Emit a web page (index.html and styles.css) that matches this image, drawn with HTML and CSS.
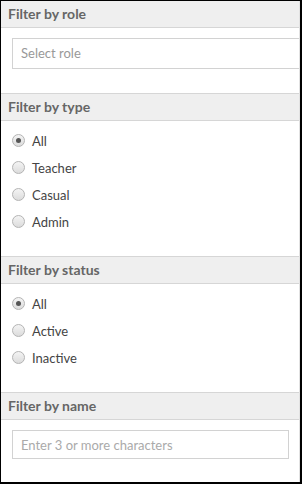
FILE: index.html
```html
<!DOCTYPE html>
<html lang="en">
  <head>
    <meta charset="UTF-8" />
    <meta name="viewport" content="width=device-width, initial-scale=1.0" />
    <title>Staff filters</title>
    <link rel="stylesheet" href="styles.css">
  </head>
  <body>
    <div class="filters">
      <section class="filter">
        <h3 class="filter-title">Filter by role</h3>
        <div class="filter-body">
          <div class="field field-wide">Select role</div>
        </div>
      </section>

      <section class="filter">
        <h3 class="filter-title">Filter by type</h3>
        <div class="filter-body options">
          <label class="option"><input type="radio" name="type" checked> All</label>
          <label class="option"><input type="radio" name="type"> Teacher</label>
          <label class="option"><input type="radio" name="type"> Casual</label>
          <label class="option"><input type="radio" name="type"> Admin</label>
        </div>
      </section>

      <section class="filter">
        <h3 class="filter-title">Filter by status</h3>
        <div class="filter-body options">
          <label class="option"><input type="radio" name="status" checked> All</label>
          <label class="option"><input type="radio" name="status"> Active</label>
          <label class="option"><input type="radio" name="status"> Inactive</label>
        </div>
      </section>

      <section class="filter">
        <h3 class="filter-title">Filter by name</h3>
        <div class="filter-body">
          <input class="field field-name" type="text" placeholder="Enter 3 or more characters">
        </div>
      </section>
    </div>
  </body>
</html>
```

FILE: styles.css
```css
body {
  margin: 0;
  background: #000;
  font-family: 'Lato', 'Open Sans', sans-serif;
}

.filters {
  margin: 1px 2px 2px 1px;
  height: 481px;
  background: #fff;
  border-right: 1px solid #e2e2e2;
  overflow: hidden;
}

.filter + .filter {
  border-top: 1px solid #d6d6d6;
}

.filter-title {
  margin: 0;
  height: 26px;
  line-height: 26px;
  padding: 0 7px;
  background: #efefef;
  border-bottom: 1px solid #d6d6d6;
  font-size: 14px;
  font-weight: bold;
  color: #666;
}

.filter-body {
  padding: 10px 10px 24px 11px;
}

.field {
  box-sizing: border-box;
  display: block;
  height: 31px;
  padding: 0 8px;
  border: 1px solid #d2d2d2;
  background: #fff;
  font-family: inherit;
  font-size: 13px;
  line-height: 29px;
  color: #999;
}

.field-wide {
  width: 320px;
}

.field-name {
  width: 277px;
  height: 29px;
  line-height: 27px;
  margin: 0;
  outline: none;
}

.field-name::placeholder {
  color: #aaa;
}

.options {
  padding: 6px 0 21px 11px;
}

.option {
  display: flex;
  align-items: center;
  height: 27px;
  font-size: 13px;
  color: #444;
}

.option input {
  appearance: none;
  -webkit-appearance: none;
  box-sizing: border-box;
  width: 13px;
  height: 13px;
  margin: 0 7px 0 0;
  border: 1px solid #b4b4b4;
  border-radius: 50%;
  background: linear-gradient(#f4f4f4, #dcdcdc);
  position: relative;
}

.option input:checked::after {
  content: '';
  position: absolute;
  left: 3px;
  top: 3px;
  width: 5px;
  height: 5px;
  border-radius: 50%;
  background: #555;
}
```
